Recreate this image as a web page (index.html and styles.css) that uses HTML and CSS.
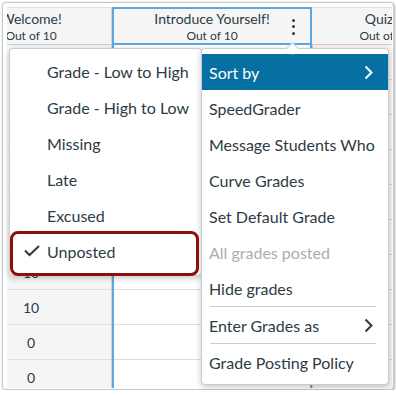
FILE: index.html
```html
<!DOCTYPE html>
<html>
<head>
<meta charset="utf-8">
<link rel="stylesheet" href="styles.css">
</head>
<body>
<div class="frame">
  <div class="grid">
    <div class="col col1">
      <div class="hcell"><div class="title">Welcome!</div><div class="sub">Out of 10</div></div>
      <div class="cell">10</div>
      <div class="cell">10</div>
      <div class="cell">8</div>
      <div class="cell">10</div>
      <div class="cell">0</div>
      <div class="cell">10</div>
      <div class="cell">10</div>
      <div class="cell">10</div>
      <div class="cell">0</div>
      <div class="cell">0</div>
    </div>
    <div class="col col2">
      <div class="hcell active">
        <div class="htext"><div class="title">Introduce Yourself!</div><div class="sub">Out of 10</div></div>
        <span class="kebab"><i></i><i></i><i></i></span>
      </div>
      <div class="cell"></div>
      <div class="cell"></div>
      <div class="cell"></div>
      <div class="cell"></div>
      <div class="cell"></div>
      <div class="cell"></div>
      <div class="cell"></div>
      <div class="cell"></div>
      <div class="cell"></div>
      <div class="cell"></div>
    </div>
    <div class="col col3">
      <div class="hcell"><div class="title">Quiz 1</div><div class="sub">Out of 10</div></div>
      <div class="cell pink"></div>
      <div class="cell pink"></div>
      <div class="cell pink"></div>
      <div class="cell pink"></div>
      <div class="cell pink"></div>
      <div class="cell pink"></div>
      <div class="cell pink"></div>
      <div class="cell pink"></div>
      <div class="cell pink"></div>
      <div class="cell pink"></div>
    </div>
  </div>

  <div class="menu submenu">
    <div class="item"><span class="mark"></span>Grade - Low to High</div>
    <div class="item"><span class="mark"></span>Grade - High to Low</div>
    <div class="item"><span class="mark"></span>Missing</div>
    <div class="item"><span class="mark"></span>Late</div>
    <div class="item"><span class="mark"></span>Excused</div>
    <div class="item"><span class="mark"><svg width="16" height="12" viewBox="0 0 16 12"><polyline points="1,5.5 5.5,10 15,1" fill="none" stroke="#2D3B45" stroke-width="2"/></svg></span>Unposted</div>
  </div>

  <div class="menu mainmenu">
    <div class="item sel"><span>Sort by</span><svg class="chev" width="9" height="15" viewBox="0 0 9 15"><polyline points="1.5,1.5 7.5,7.5 1.5,13.5" fill="none" stroke="#fff" stroke-width="2"/></svg></div>
    <div class="item">SpeedGrader</div>
    <div class="item">Message Students Who</div>
    <div class="item">Curve Grades</div>
    <div class="item">Set Default Grade</div>
    <div class="item disabled">All grades posted</div>
    <div class="item">Hide grades</div>
    <div class="sep"></div>
    <div class="item"><span>Enter Grades as</span><svg class="chev" width="9" height="15" viewBox="0 0 9 15"><polyline points="1.5,1.5 7.5,7.5 1.5,13.5" fill="none" stroke="#2D3B45" stroke-width="2"/></svg></div>
    <div class="sep"></div>
    <div class="item">Grade Posting Policy</div>
  </div>

  <div class="callout"></div>
</div>
</body>
</html>
```

FILE: styles.css
```css
body {
  margin: 0;
  background: #fff;
  font-family: Lato, "Open Sans", sans-serif;
  color: #2D3B45;
}

.frame {
  position: relative;
  margin: 2px 0 0 2px;
  width: 392px;
  height: 388px;
  box-sizing: border-box;
  border: 1px solid #c4c7c9;
  border-radius: 4px;
  box-shadow: 1px 1px 3px rgba(0, 0, 0, 0.3);
  padding: 4px 1px 1px 4px;
  background: #fff;
}

.grid {
  display: flex;
  height: 100%;
  overflow: hidden;
}

.col {
  flex: none;
  box-sizing: border-box;
}

.col1 {
  width: 161px;
  margin-left: -56px;
  background: #f5f5f5;
  border-right: 1px solid #d0d4d7;
}

.col2 {
  width: 200px;
  border-left: 2px solid #5ba7e0;
  border-right: 2px solid #5ba7e0;
  background: #fff;
}

.col3 {
  width: 146px;
  background: #fff;
}

.hcell {
  height: 38px;
  box-sizing: border-box;
  background: #f5f5f5;
  border-top: 1px solid #dfe2e4;
  border-bottom: 1px solid #c7cdd1;
  padding-top: 2px;
  text-align: center;
}

.hcell.active {
  border-top: 2px solid #5ba7e0;
  border-bottom: 2px solid #5ba7e0;
  padding-top: 1px;
  display: grid;
  grid-template-columns: 1fr auto 1fr;
}

.htext {
  grid-column: 2;
}

.title {
  font-size: 14px;
  line-height: 18px;
  white-space: nowrap;
}

.sub {
  font-size: 12px;
  line-height: 16px;
  white-space: nowrap;
}

.kebab {
  grid-column: 3;
  justify-self: end;
  margin: 8.5px 15px 0 0;
  display: flex;
  flex-direction: column;
  gap: 3.5px;
}

.kebab i {
  display: block;
  width: 3px;
  height: 3px;
  border-radius: 50%;
  background: #2D3B45;
}

.cell {
  height: 35px;
  box-sizing: border-box;
  border-bottom: 1px solid #dcdfe1;
  font-size: 14px;
  display: flex;
  align-items: center;
  justify-content: center;
}

.cell.pink {
  background: #fdf1f1;
  border-left: 1px solid #f0c4c4;
  border-bottom-color: #f0c4c4;
}

.menu {
  position: absolute;
  top: 45px;
  box-sizing: border-box;
  background: #fff;
  border: 1px solid #c7cdd1;
  border-radius: 4px;
  box-shadow: 0 2px 6px rgba(0, 0, 0, 0.22);
  font-size: 16px;
  color: #2D3B45;
}

.submenu {
  left: 6px;
  width: 193px;
  height: 228px;
  padding: 4px 0 0;
}

.mark {
  flex: none;
  display: block;
  width: 16px;
  height: 12px;
  margin-right: 7px;
}

.mark svg {
  display: block;
}

.mainmenu {
  left: 198px;
  width: 188px;
  height: 337px;
  padding: 5px 0 3px;
}

.mainmenu::before {
  content: "";
  position: absolute;
  left: 86px;
  top: -5px;
  width: 8px;
  height: 8px;
  background: #fff;
  border-top: 1px solid #c7cdd1;
  border-left: 1px solid #c7cdd1;
  transform: rotate(45deg);
}

.item {
  height: 36px;
  display: flex;
  align-items: center;
  justify-content: space-between;
  padding: 0 15px 0 7px;
  white-space: nowrap;
}

.submenu .item {
  justify-content: flex-start;
  padding: 0 0 0 14px;
}

.item.sel {
  background: #0770A3;
  color: #fff;
}

.item.disabled {
  color: #a5afb5;
}

.chev {
  display: block;
}

.sep {
  height: 1px;
  background: #c7cdd1;
  margin: 0 12px 0 8px;
}

.callout {
  position: absolute;
  left: 7px;
  top: 228px;
  width: 189px;
  height: 45px;
  box-sizing: border-box;
  border: 3px solid #8f0d0d;
  border-radius: 8px;
}
```
